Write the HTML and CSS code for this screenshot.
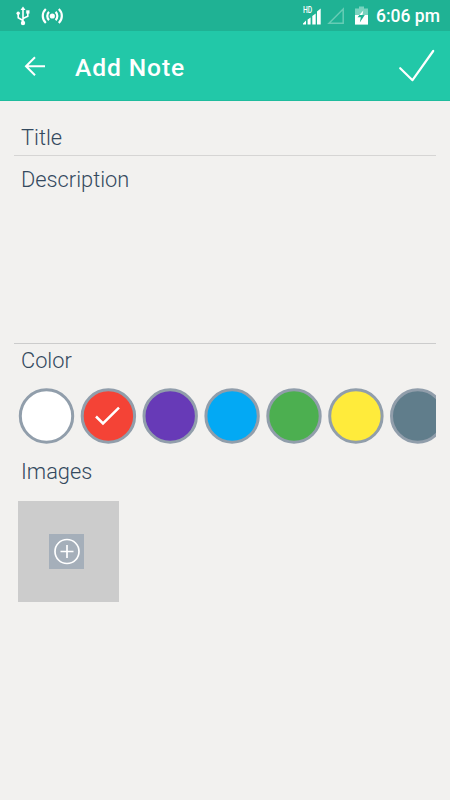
FILE: index.html
```html
<!DOCTYPE html>
<html lang="en">
<head>
<meta charset="utf-8">
<title>Add Note</title>
<link rel="stylesheet" href="styles.css">
</head>
<body>
<div class="status">
  <svg class="usb" width="14" height="20" viewBox="0 0 14 20" fill="none" stroke="#fff" stroke-width="1.6"><path d="M7 3v14M7 14.500L2.200 11.800V8M7 12.500l4.800-2.200V6.500"/><path d="M7 .5L4.500 4h5z" fill="#fff" stroke="none"/><circle cx="7" cy="17" r="2.200" fill="#fff" stroke="none"/><circle cx="2.200" cy="7.200" r="1.700" fill="#fff" stroke="none"/><path d="M10.200 4.300h3.300v3.300h-3.300z" fill="#fff" stroke="none"/></svg>
  <svg class="cast" width="22" height="16" viewBox="0 0 22 16" fill="none" stroke="#fff" stroke-width="2.200"><circle cx="11.300" cy="8" r="2.600" fill="#fff" stroke="none"/><path d="M8 3.900a5.700 5.700 0 0 0 0 8.200M14.600 3.900a5.700 5.700 0 0 1 0 8.200M4.800 1a9.600 9.600 0 0 0 0 14M17.800 1a9.600 9.600 0 0 1 0 14"/></svg>
  <span class="spacer"></span>
  <span class="signal"><span class="hd">HD</span>
  <svg width="20" height="20" viewBox="0 0 20 20" fill="#fff"><path d="M1 18.500v-1l3-3v4zM5.600 18.500v-5l3-2v7zM10.300 18.500v-8.500l3.400-2.500v11zM15 18.500v-13l3.700-3v16z"/></svg></span>
  <svg class="empty" width="18" height="18" viewBox="0 0 18 18" fill="none" stroke="#66ccb5" stroke-width="1.500"><path d="M2 16.300L16.200 2v14.300z"/></svg>
  <svg class="battery" width="13" height="19" viewBox="0 0 13 19"><path d="M0 2.500h4V.5h5v2h4v16H0z" fill="#79d3bf"/><path d="M0 9h13v9.500H0z" fill="#fff"/><path d="M9.800 9L4.800 16.500l1-5.200H2.500L4.400 9z" fill="#1fb294"/><path d="M8.300 4.500L4.400 9h3z" fill="#fff"/></svg>
  <span class="time">6:06 pm</span>
</div>
<header class="bar">
  <svg class="back" width="22" height="22" viewBox="0 0 22 22" fill="none" stroke="#fff" stroke-width="2"><path d="M21 11.200H2.500M11 2.200l-9 9 9 9"/></svg>
  <h1>Add Note</h1>
  <svg class="done" width="38" height="36" viewBox="0 0 38 36" fill="none" stroke="#fff" stroke-width="2.200" stroke-linecap="round" stroke-linejoin="round"><path d="M2.200 20.200l12.300 12L35.200 3"/></svg>
</header>
<main>
  <div class="field title">Title</div>
  <div class="field desc">Description</div>
  <h2 class="color">Color</h2>
  <div class="swatches">
    <svg class="dots" width="440" height="56" viewBox="0 0 440 56" stroke="#919eab" stroke-width="3">
      <circle cx="32.500" cy="28" r="26.200" fill="#fff"/>
      <circle cx="94.400" cy="28" r="26.200" fill="#f44336"/>
      <path d="M82 28.500l7 7L105 19.700" fill="none" stroke="#fff" stroke-width="2.500"/>
      <circle cx="156.200" cy="28" r="26.200" fill="#673ab7"/>
      <circle cx="218.100" cy="28" r="26.200" fill="#03a9f4"/>
      <circle cx="280" cy="28" r="26.200" fill="#4caf50"/>
      <circle cx="341.900" cy="28" r="26.200" fill="#ffeb3b"/>
      <circle cx="403.700" cy="28" r="26.200" fill="#607d8b"/>
    </svg>
  </div>
  <h2 class="images">Images</h2>
  <div class="tile"><div class="add"><svg width="26" height="26" viewBox="0 0 26 26" fill="none" stroke="#fff" stroke-width="1.700"><circle cx="13" cy="12.500" r="12"/><path d="M13 6v13M6.500 12.500h13"/></svg></div></div>
</main>
</body>
</html>
```

FILE: styles.css
```css
* { box-sizing: border-box; }
body {
  margin: 0;
  height: 800px;
  overflow: hidden;
  background: #f2f1ef;
  font-family: Roboto, sans-serif;
  color: #34495e;
}
svg { display: block; flex: none; overflow: visible; }
.status {
  display: flex;
  height: 31px;
  padding: 0 10px 0 16px;
  background: #1fb294;
  color: #fff;
}
.usb { margin-top: 6px; }
.cast { margin: 8px 0 0 11px; }
.spacer { flex: 1; }
.signal { position: relative; width: 20px; padding-top: 6px; }
.hd {
  position: absolute;
  left: 1px;
  top: 6px;
  font-size: 9px;
  font-weight: 500;
  line-height: 9px;
  transform: scaleX(0.75);
  transform-origin: left;
}
.empty { margin: 7px 0 0 5px; }
.battery { margin: 6px 0 0 10px; }
.time {
  width: 64px;
  margin-left: 8px;
  font-size: 17.500px;
  font-weight: 500;
  line-height: 33px;
  white-space: nowrap;
}
.bar {
  display: flex;
  align-items: center;
  height: 70px;
  padding: 0 14px 0 24px;
  background: #22c8a8;
  border-bottom: 1px solid #1fbc9d;
  color: #fff;
}
.bar h1 {
  flex: 1;
  margin: 4px 0 0 29px;
  font-size: 24.600px;
  line-height: 30px;
  font-weight: 500;
  letter-spacing: 0.900px;
}
main { padding: 21px 14px 0; }
.field, h2 {
  margin: 0;
  padding-left: 7px;
  font-size: 21.800px;
  font-weight: 300;
  line-height: 30px;
}
.field { border-bottom: 1px solid #ccc; }
.title { height: 34px; padding-top: 1px; border-color: #d6d5d4; }
.desc { height: 188px; padding-top: 9px; }
.color { padding-top: 2px; height: 44px; }
.swatches {
  height: 56px;
  overflow: hidden;
}
.images { margin-top: 13px; height: 44px; }
.tile {
  display: flex;
  align-items: center;
  justify-content: center;
  width: 101px;
  height: 101px;
  margin-left: 3.500px;
  padding-right: 3px;
  background: #ccc;
}
.add {
  display: flex;
  align-items: center;
  justify-content: center;
  width: 35px;
  height: 35px;
  background: #a5afba;
}
```
